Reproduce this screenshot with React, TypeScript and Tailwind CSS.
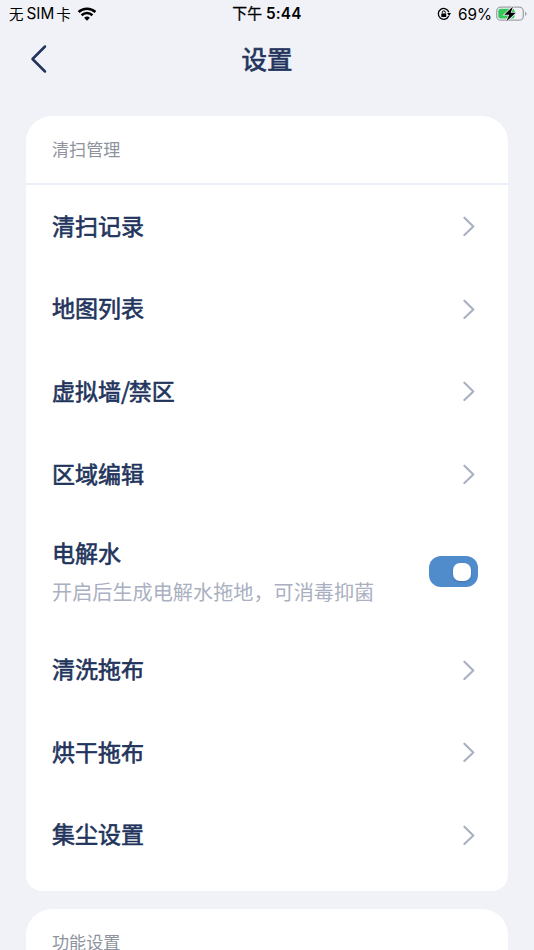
import React from "react";

function Chevron() {
  return (
    <svg className="mr-[33px] h-5 w-3 shrink-0" viewBox="0 0 12 20" fill="none">
      <path d="M1.4 1.7L10.3 10.5L1.4 19" stroke="#a9b0c1" strokeWidth="2.1" strokeLinecap="round" strokeLinejoin="round" />
    </svg>
  );
}

function Row({ label }: { label: string }) {
  const [first, second] = label.split("/");
  return (
    <div className="flex h-[82.6px] items-center justify-between pl-[26px]">
      <span className="pb-[3px] text-[23px] leading-8 [-webkit-text-stroke:0.6px_#22345c]">
        {first}
        {second && <span className="tracking-[-1.4px]">/</span>}
        {second}
      </span>
      <Chevron />
    </div>
  );
}

function StatusBar() {
  return (
    <header className="grid h-7 grid-cols-3 items-center text-black">
      <div className="flex items-center pl-[9px]">
        <span className="flex whitespace-nowrap leading-7">
          <span className="text-[14.5px]">无</span>
          <span className="ml-[3px] font-[Inter] text-[15.3px]">SIM</span>
          <span className="ml-[2px] text-[14.5px]">卡</span>
        </span>
        <svg className="ml-[6px] h-[15px] w-5 shrink-0 pb-px" viewBox="0 0 20 15" fill="none" stroke="#000" strokeWidth="2.7">
          <path d="M1 5.4C6 .7 14 .7 19 5.4" />
          <path d="M4.2 8.8C7.5 5.7 12.5 5.7 15.8 8.8" />
          <path d="M6.9 11.6Q10 8.9 13.1 11.6L10 14.7Z" fill="#000" stroke="none" />
        </svg>
      </div>
      <div className="flex items-center justify-center gap-1 leading-7">
        <span className="pb-[2px] text-[14.8px] leading-[26px] [-webkit-text-stroke:0.3px_#000]">下午</span>
        <span className="font-[Inter] text-[15.3px] font-semibold tracking-[0.2px]">5:44</span>
      </div>
      <div className="flex items-center justify-end pr-[7px]">
        <svg className="mr-[7px] h-[14px] w-[14px] shrink-0" viewBox="0 0 14 14" fill="none">
          <path d="M11.7 9A5.4 5.4 0 1 1 11.9 5.3" stroke="#000" strokeWidth="1.3" />
          <path d="M10.1 6H14L12.1 8.9Z" fill="#000" />
          <rect x="4.3" y="6.4" width="4.9" height="3.7" rx=".6" fill="#000" />
          <path d="M5.3 6.6V5.3a1.5 1.5 0 0 1 3 0v1.3" stroke="#000" />
        </svg>
        <span className="mr-1 pt-px font-[Inter] text-[15.3px] leading-[27px]">69%</span>
        <svg className="h-[18px] w-[31px] shrink-0" viewBox="0 0 31 18" fill="none">
          <rect x=".7" y="2.2" width="26.6" height="13" rx="4" stroke="#a1a2a5" strokeWidth="1.3" />
          <path d="M29 6.7v4.2c2-.6 2-3.6 0-4.2Z" fill="#a1a2a5" />
          <rect x="2.3" y="3.8" width="16.2" height="9.8" rx="2.4" fill="#35c759" />
          <path d="M17 1.5L8.3 9.7h4.9L10.3 16.5L19.8 7.8h-5.1Z" fill="#000" stroke="#f1f2f8" strokeWidth="1.5" paintOrder="stroke" />
        </svg>
      </div>
    </header>
  );
}

export default function App() {
  return (
    <main className="h-[950px] w-[534px] overflow-hidden bg-[#f1f2f8] font-['Noto_Sans_CJK_SC',sans-serif] text-[#22345c]">
      <StatusBar />
      <nav className="grid h-[62px] grid-cols-3 items-center">
        <svg className="ml-[30px] h-[30px] w-[18px]" viewBox="0 0 18 30" fill="none">
          <path d="M15 2.5L2.5 15L15 27.5" stroke="#22345c" strokeWidth="2.5" strokeLinecap="round" strokeLinejoin="round" />
        </svg>
        <h1 className="pb-[3px] text-center text-[25.5px] leading-9 [-webkit-text-stroke:0.7px_#22345c]">设置</h1>
      </nav>
      <section className="mx-[26px] mt-[26px] h-[775px] overflow-hidden rounded-t-[26px] rounded-b-[16px] bg-white">
        <h2 className="flex h-[69px] items-center border-b-2 border-[#ebeff9] pb-px pl-[26px] text-[17.1px] text-[#8e939d]">清扫管理</h2>
        <Row label="清扫记录" />
        <Row label="地图列表" />
        <Row label="虚拟墙/禁区" />
        <Row label="区域编辑" />
        <div className="flex h-[113px] items-center justify-between pr-[30px] pl-[26px]">
          <div className="flex flex-col gap-[10px]">
            <span className="text-[23px] leading-[30px] [-webkit-text-stroke:0.6px_#22345c]">电解水</span>
            <span className="text-[20.15px] leading-[30px] text-[#a9b0c1]">开启后生成电解水拖地，可消毒抑菌</span>
          </div>
          <button className="flex h-[31px] w-[49px] items-center justify-end rounded-[12px] bg-[#508bcb] pr-[7px]">
            <span className="h-[18px] w-[18px] rounded-[7px] bg-white shadow-[0_1px_2px_rgba(30,60,120,0.3)]" />
          </button>
        </div>
        <Row label="清洗拖布" />
        <Row label="烘干拖布" />
        <Row label="集尘设置" />
      </section>
      <section className="mx-[26px] mt-[18px] h-[120px] rounded-t-[26px] bg-white">
        <h2 className="flex h-[68px] items-center pb-[2px] pl-[26px] text-[17.1px] text-[#8e939d]">功能设置</h2>
      </section>
    </main>
  );
}
